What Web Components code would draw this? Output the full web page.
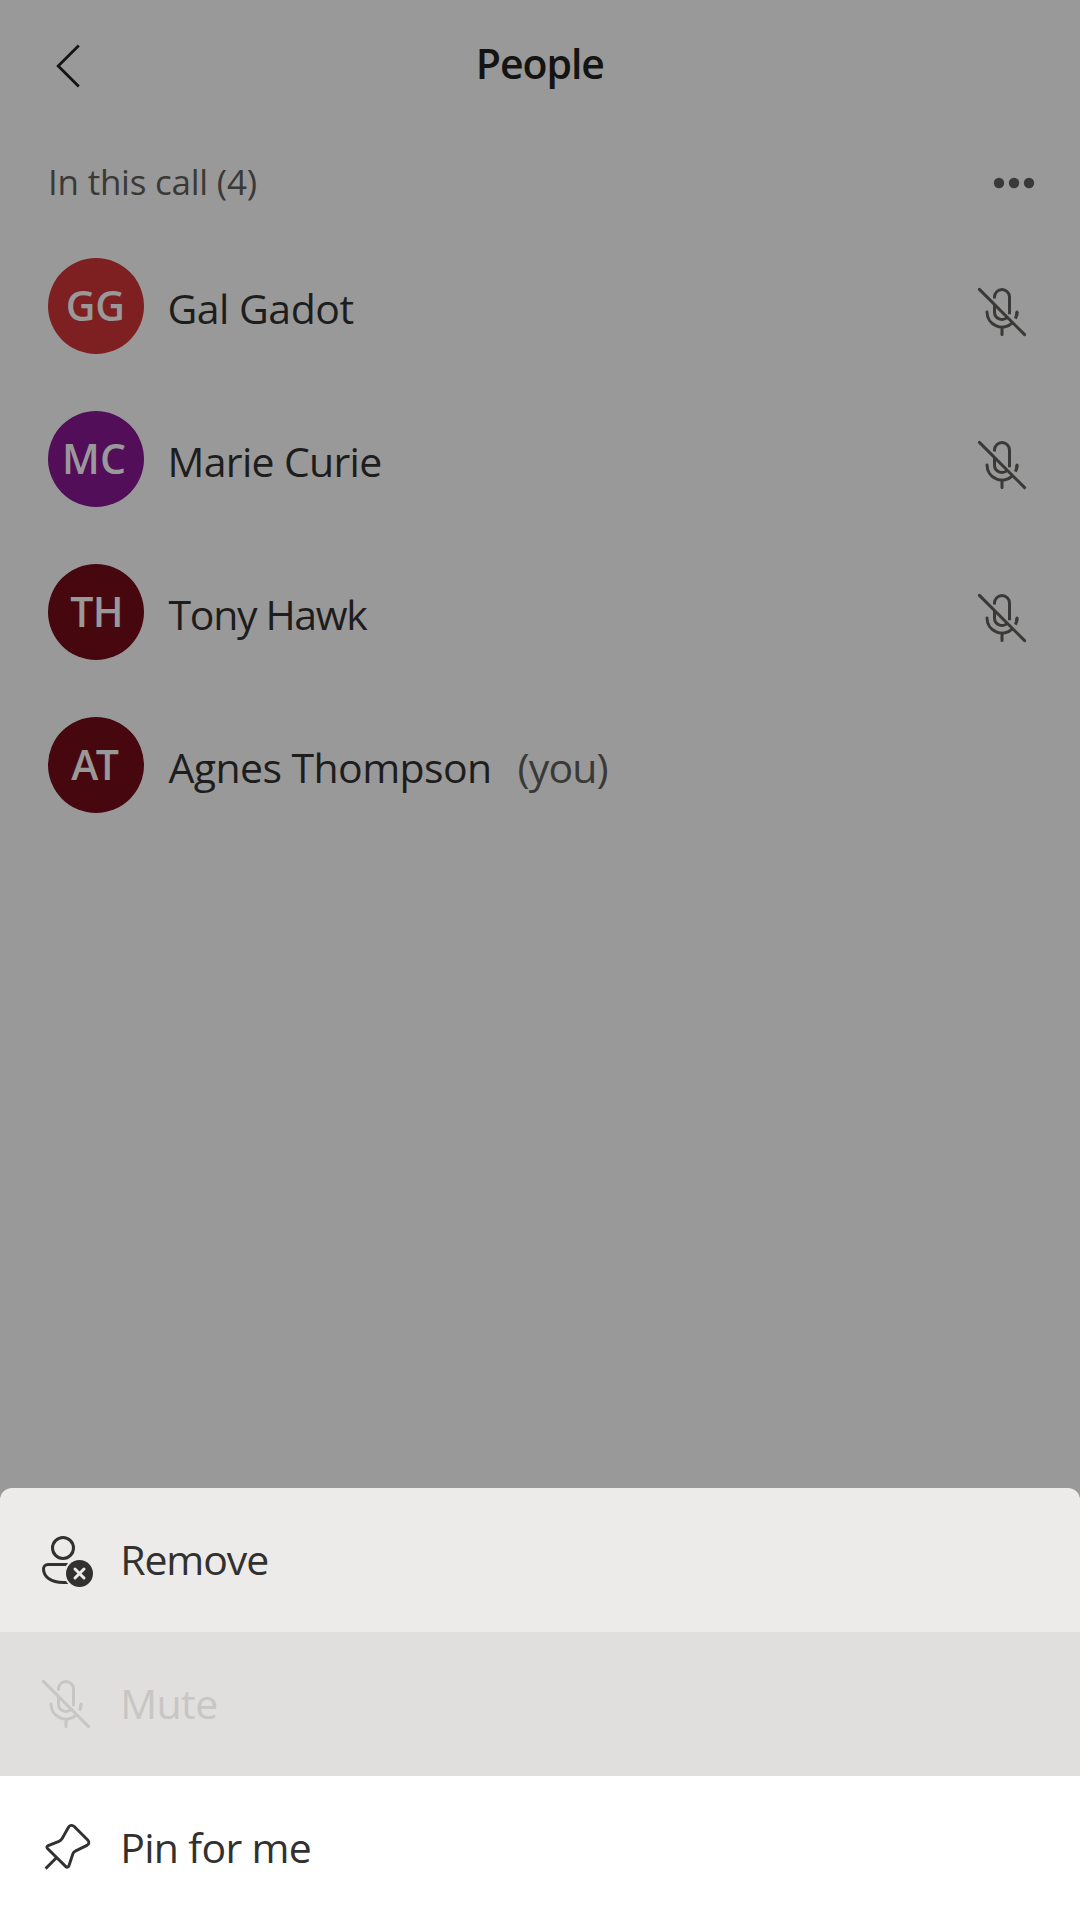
<!DOCTYPE html>
<html lang="en">
<head>
<meta charset="utf-8">
<title>People</title>
<style>
html, body { margin: 0; height: 100%; background: #999; }
body { font-family: "Open Sans", "Noto Sans", sans-serif; font-size: 41px; color: #1e1d1d; overflow: hidden; }
</style>
</head>
<body>
<people-screen>
  <top-bar slot="header"><fit-text ink="124.5">People</fit-text></top-bar>
  <section-bar slot="section"><fit-text ink="204.7">In this call (4)</fit-text></section-bar>
  <person-row muted color="#7e2022" shift="1.4"><fit-text slot="initials" ink="54.6">GG</fit-text><fit-text ink="184">Gal Gadot</fit-text></person-row>
  <person-row muted color="#520e59" shift="3.6"><fit-text slot="initials" ink="60.2">MC</fit-text><fit-text ink="208.6">Marie Curie</fit-text></person-row>
  <person-row muted color="#46070f" shift="0.6"><fit-text slot="initials" ink="49.6">TH</fit-text><fit-text ink="199.6">Tony Hawk</fit-text></person-row>
  <person-row color="#46070f" shift="0.4"><fit-text slot="initials" ink="47.7">AT</fit-text><fit-text ink="320.7">Agnes Thompson</fit-text><fit-text slot="note" ink="89">(you)</fit-text></person-row>
  <action-sheet slot="sheet">
    <sheet-item icon="remove" style="--bg:#ecebe9"><fit-text ink="143">Remove</fit-text></sheet-item>
    <sheet-item icon="mic" style="--bg:#e0dfdd;--fg:#c8c6c4"><fit-text ink="92">Mute</fit-text></sheet-item>
    <sheet-item icon="pin" style="--bg:#fff"><fit-text ink="185.6">Pin for me</fit-text></sheet-item>
  </action-sheet>
</people-screen>
<script>
const ICONS = {
  mic: `<g stroke-width="3" fill="none" stroke="currentColor">
    <path stroke-linecap="round" d="M1.4 1.4 46.6 46.6M9 24a15 15 0 0 0 25.6 10.6M24 39v7.6M39 24c0 1.2-.1 2.3-.4 3.4"/>
    <path d="M16.5 10.6V9a7.5 7.5 0 0 1 15 0v17.2M16.5 16.5V24a7.5 7.5 0 0 0 12.8 5.3M39 24c0 2.3-.6 4.7-1.6 6.7"/></g>`,
  remove: `<g fill="none" stroke="currentColor" stroke-width="3">
    <circle cx="21" cy="12" r="10.5"/>
    <path d="M26 28.5H6A4.5 4.5 0 0 0 1.5 33C1.5 41 9.5 46.5 21 46.5h5"/></g>
    <circle cx="37.5" cy="37.5" r="15.4" fill="var(--bg)"/>
    <circle cx="37.5" cy="37.5" r="13.5" fill="currentColor"/>
    <path d="m33 33 9 9m0-9-9 9" stroke="var(--bg)" stroke-width="3" stroke-linecap="round"/>`,
  pin: `<path fill="none" stroke="currentColor" stroke-width="2.9" stroke-linejoin="round" d="M3.6 44.6 14.7 33.5M5.5 24.5C4.5 23.4 4.8 22.3 6.2 21.7L17 17.3Q19 16.5 20 14.8L26.5 3.3C27.8 1 30.5.8 32.2 2.5L45.7 16C47.6 17.9 47.1 20.3 44.9 21.4L33.3 27.1Q31.5 28 30.9 29.8L27 41.5C26.4 43.3 24.9 43.7 23.6 42.4Z"/>`
};
const icon = name => `<svg width="48" height="48" viewBox="0 0 48 48" overflow="visible" aria-hidden="true">${ICONS[name]}</svg>`;

class Base extends HTMLElement {
  connectedCallback() {
    if (!this.shadowRoot) this.attachShadow({ mode: 'open' }).innerHTML = this.render();
    this.ready?.();
  }
}

customElements.define('people-screen', class extends Base {
  render() {
    return `<style>
      :host{display:flex;flex-direction:column;width:1080px;height:1920px;background:#999}
      .list{display:flex;flex-direction:column;gap:9px;flex:1}
    </style><slot name="header"></slot><slot name="section"></slot><div class="list"><slot></slot></div><slot name="sheet"></slot>`;
  }
});

customElements.define('top-bar', class extends Base {
  render() {
    return `<style>
      :host{display:grid;grid-template-columns:1fr auto 1fr;align-items:center;height:132px;padding:0 56px;box-sizing:border-box;font-weight:600;color:#141413}
      svg{display:block}.title{padding:0 0 5px 2px}
    </style><svg width="24" height="44" viewBox="0 0 24 44" fill="none" stroke="currentColor" stroke-width="2.8"><path d="M22.8 1.6 2.2 22 22.8 42.4"/></svg><div class="title"><slot></slot></div>`;
  }
});

customElements.define('section-bar', class extends Base {
  render() {
    return `<style>
      :host{display:flex;align-items:center;justify-content:space-between;height:102px;padding:0 45px 0 51px;box-sizing:border-box;font-size:35px;color:#3a3937}
      .t{padding-bottom:2px}
    </style><div class="t"><slot></slot></div><svg width="42" height="12" viewBox="0 0 42 12" fill="currentColor"><circle cx="6" cy="6" r="5.2"/><circle cx="21" cy="6" r="5.2"/><circle cx="36" cy="6" r="5.2"/></svg>`;
  }
});

customElements.define('person-row', class extends Base {
  render() {
    return `<style>
      :host{display:flex;align-items:center;height:144px;padding:0 54px 0 48px;box-sizing:border-box}
      .avatar{display:flex;align-items:center;justify-content:center;width:96px;height:96px;padding-right:2px;box-sizing:border-box;border-radius:50%;background:${this.getAttribute('color')};color:#999;font-weight:600;margin-right:${24 + +this.getAttribute('shift')}px}
      .name{display:flex;gap:29.4px;padding-top:6px;flex:1}
      .note{color:#3a3937} svg{display:block;margin-top:12px}
    </style><div class="avatar"><slot name="initials"></slot></div><div class="name"><slot></slot><div class="note"><slot name="note"></slot></div></div>${this.hasAttribute('muted') ? `<span style="color:#3a3937">${icon('mic')}</span>` : ''}`;
  }
});

customElements.define('action-sheet', class extends Base {
  render() {
    return `<style>:host{display:flex;flex-direction:column;border-radius:12px 12px 0 0;overflow:hidden}</style><slot></slot>`;
  }
});

customElements.define('sheet-item', class extends Base {
  render() {
    return `<style>
      :host{display:flex;align-items:center;gap:34.2px;height:144px;padding:0 42px;box-sizing:border-box;background:var(--bg);color:var(--fg,#323130)}
      svg{display:block}
    </style>${icon(this.getAttribute('icon'))}<div><slot></slot></div>`;
  }
});

/* Spaces its letters so that the drawn glyphs fill the width given in "ink".
   Defined last: it reads the font its parents' shadow styles pass down. */
customElements.define('fit-text', class extends Base {
  render() {
    return `<style>:host{display:block;white-space:pre;line-height:1.3;flex:none}span{display:block;width:max-content}</style><span><slot></slot></span>`;
  }
  ready() {
    const text = this.textContent, ink = +this.getAttribute('ink');
    const cs = getComputedStyle(this);
    const ctx = document.createElement('canvas').getContext('2d');
    ctx.font = `${cs.fontWeight} ${cs.fontSize} ${cs.fontFamily}`;
    const m = ctx.measureText(text);
    const natural = m.actualBoundingBoxRight + m.actualBoundingBoxLeft;
    const span = this.shadowRoot.querySelector('span');
    span.style.letterSpacing = `${(ink - natural) / (text.length - 1)}px`;
    span.style.marginLeft = `${m.actualBoundingBoxLeft}px`;
    this.style.width = `${ink}px`;
  }
});
</script>
</body>
</html>
